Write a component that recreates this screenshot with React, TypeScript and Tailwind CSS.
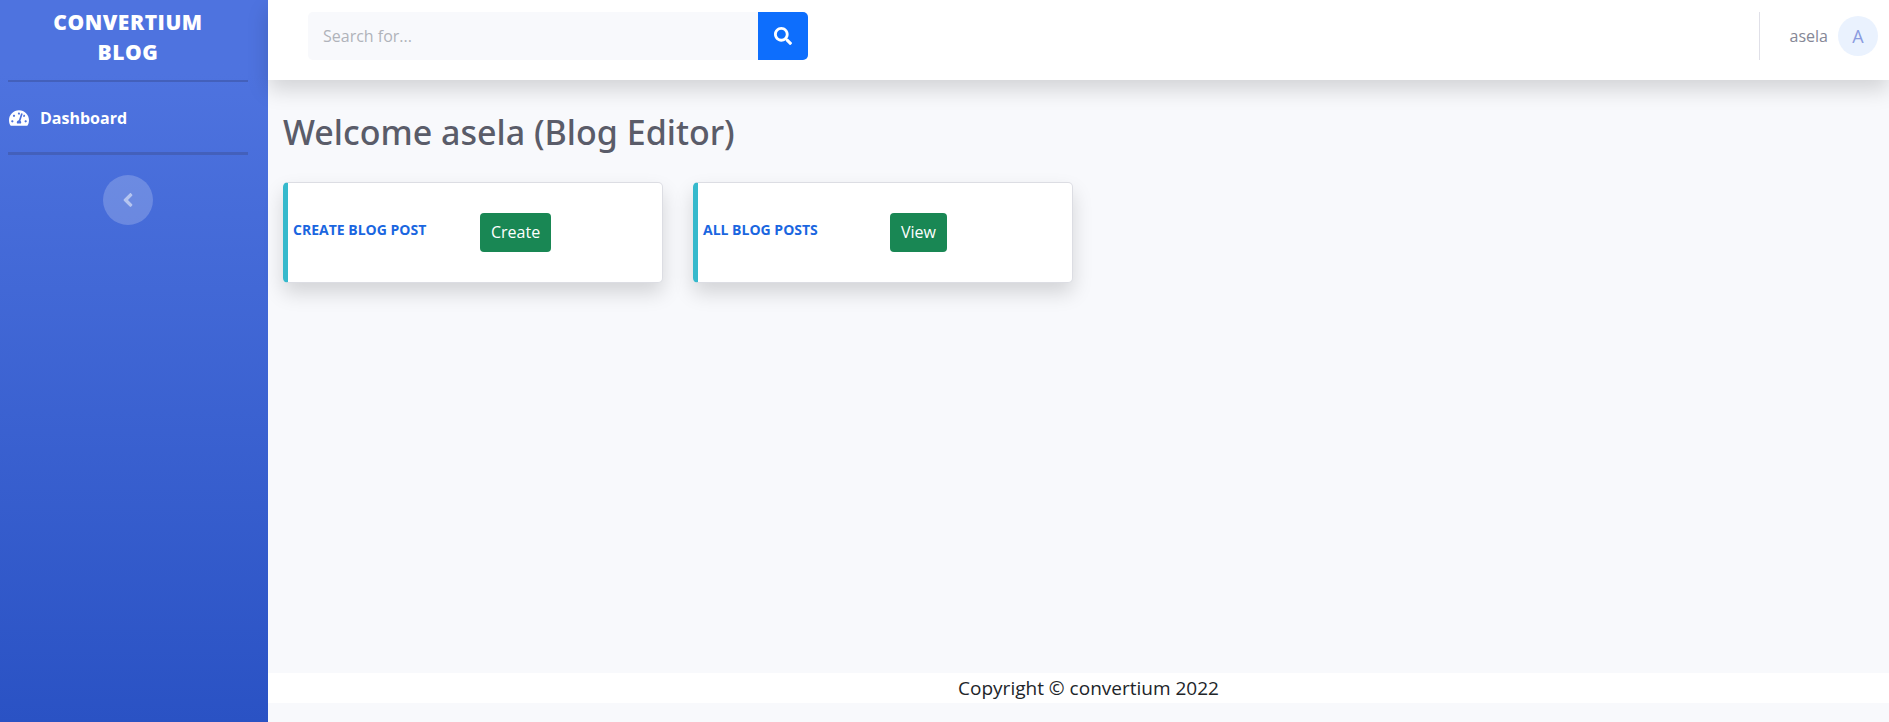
import { FaAngleLeft, FaSearch, FaTachometerAlt } from "react-icons/fa";

type CardProps = { title: string; action: string };

function ActionCard({ title, action }: CardProps) {
  return (
    <section className="flex h-[101px] w-[380px] items-center rounded-[5px] border border-l-[5px] border-[#dcdde3] border-l-[#36b9cc] bg-white pl-[5px] shadow-[0_10px_20px_rgba(0,0,0,0.15)]">
      <h2 className="w-[187px] pb-[6px] text-[14px] font-bold uppercase leading-5 text-[#1a66e0]">{title}</h2>
      <button type="button" className="h-[39px] rounded-[4px] bg-[#198754] px-[11px] pb-px text-[16px] leading-6 text-white">
        {action}
      </button>
    </section>
  );
}

function Sidebar() {
  return (
    <aside className="w-[268px] shrink-0 bg-linear-to-b from-[#4e73df] from-10% to-[#2a52c4] pl-2 pr-5">
      <a href="#" className="block px-8 pt-[7px] text-center text-[21px] font-extrabold uppercase leading-[30px] tracking-wide text-white">
        Convertium Blog
      </a>
      <hr className="mt-[13px] h-[2px] border-0 bg-[#4360bb]" />
      <nav className="pb-6 pt-[26px]">
        <a href="#" className="flex h-5 items-center gap-[11px] pl-px text-[16px] font-bold text-white">
          <FaTachometerAlt className="size-5" />
          Dashboard
        </a>
      </nav>
      <hr className="h-[3px] border-0 bg-[#4360bb]" />
      <div className="flex justify-center pt-5">
        <button type="button" aria-label="Collapse sidebar" className="flex size-[50px] items-center justify-center rounded-full bg-white/20 text-white/50">
          <FaAngleLeft className="size-[22px]" />
        </button>
      </div>
    </aside>
  );
}

function Topbar() {
  return (
    <header className="flex h-20 items-start justify-between bg-white pl-10 pr-[11px] pt-3 shadow-[0_10px_20px_rgba(0,0,0,0.15)]">
      <form className="flex h-12" onSubmit={(e) => e.preventDefault()}>
        <input
          type="text"
          aria-label="Search"
          placeholder="Search for..."
          className="w-[450px] rounded-l-[5px] bg-[#f8f9fc] px-[15px] text-[16px] text-[#6e707e] outline-none placeholder:text-[#b0b3ba]"
        />
        <button type="submit" aria-label="Search" className="flex w-[50px] items-center justify-center rounded-r-[5px] bg-[#0d6efd] text-white">
          <FaSearch className="size-[18px]" />
        </button>
      </form>
      <div className="flex h-12 items-center border-l border-[#e0e0e8] pl-[30px]">
        <a href="#" className="flex items-center gap-[10px] text-[16px] text-[#858796]">
          asela
          <span className="flex size-10 items-center justify-center rounded-full bg-[#eaf2fe] text-[18px] text-[#8a9be0]">A</span>
        </a>
      </div>
    </header>
  );
}

export default function App() {
  return (
    <div className="flex min-h-screen bg-[#f8f9fc] font-['Open_Sans','Noto_Sans',sans-serif]">
      <Sidebar />
      <div className="flex min-w-0 grow flex-col">
        <Topbar />
        <main className="grow px-[15px] pt-7">
          <h1 className="font-['Noto_Sans','Open_Sans',sans-serif] text-[34px] font-medium leading-[48px] text-[#5a5c69]">
            Welcome asela (Blog Editor)
          </h1>
          <div className="mt-[26px] flex flex-wrap gap-[30px]">
            <ActionCard title="Create Blog Post" action="Create" />
            <ActionCard title="All Blog Posts" action="View" />
          </div>
        </main>
        <footer className="mb-[19px] bg-white pl-5 text-center text-[19px] leading-[30px] text-[#212529]">
          Copyright © convertium 2022
        </footer>
      </div>
    </div>
  );
}
